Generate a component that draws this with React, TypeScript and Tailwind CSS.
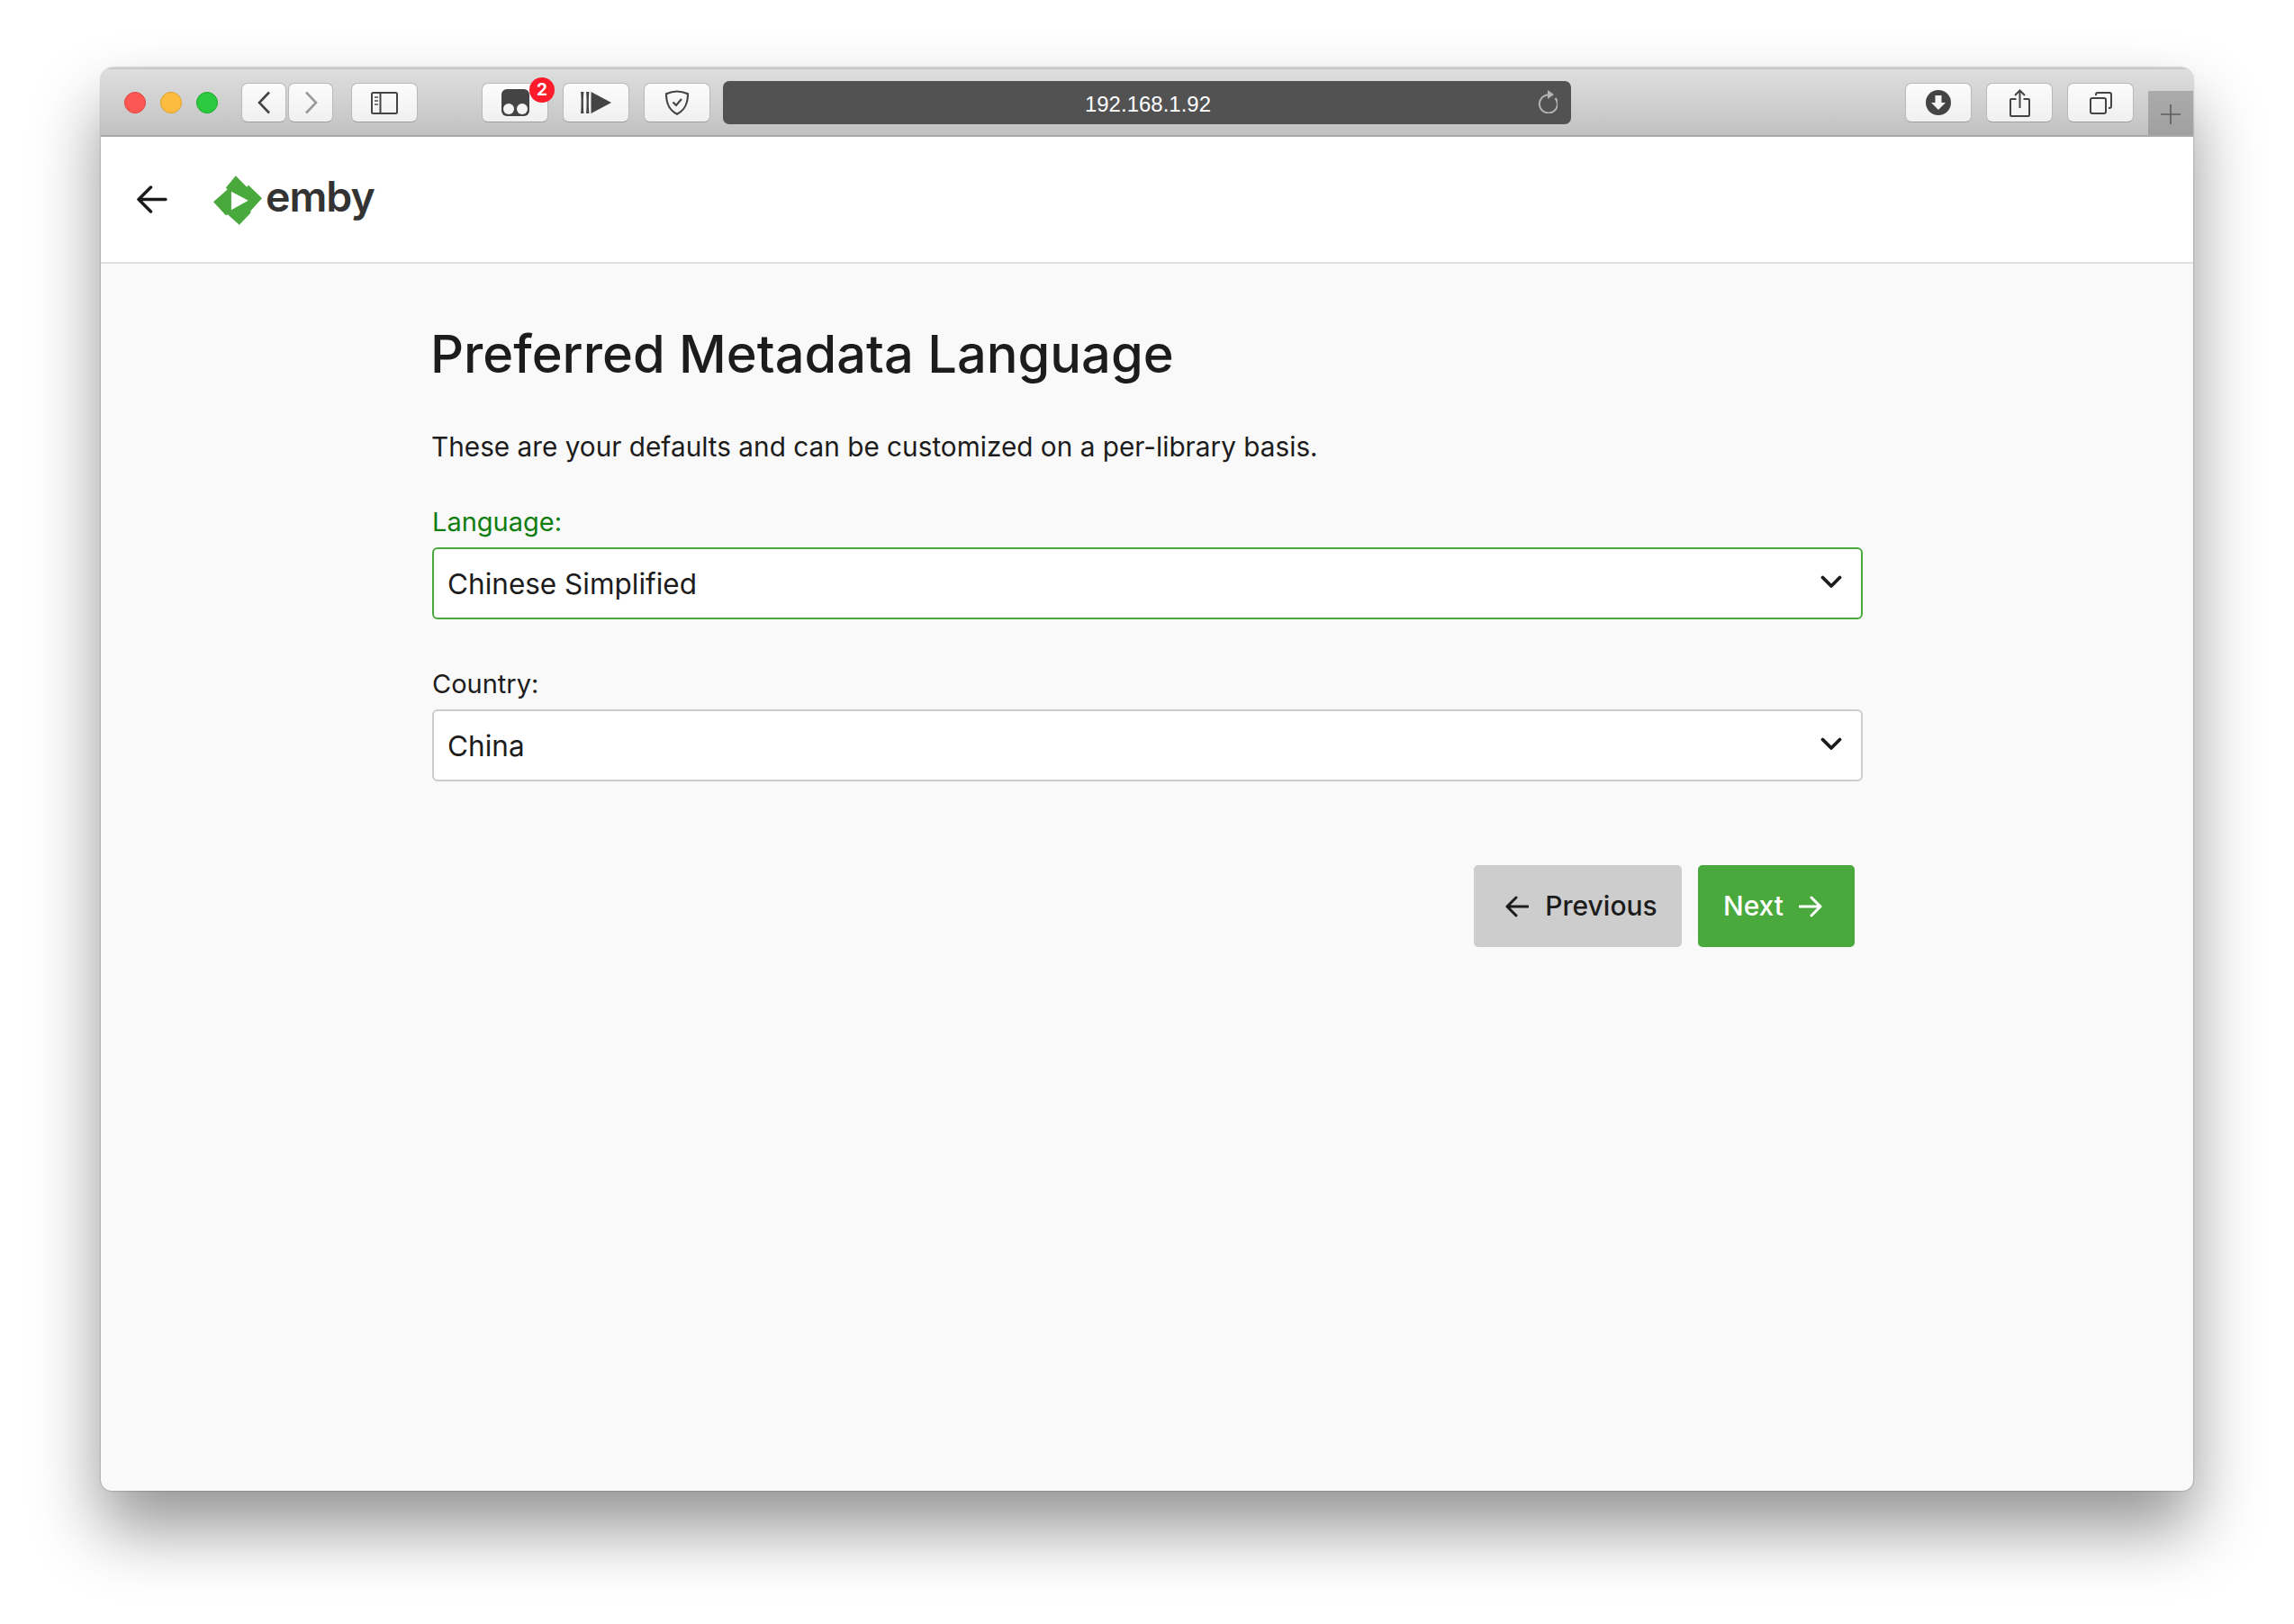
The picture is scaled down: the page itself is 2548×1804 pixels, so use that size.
const font = { fontFamily: "Inter, 'Liberation Sans', sans-serif" };

function ToolButton({ className = "", children }: { className?: string; children?: React.ReactNode }) {
  return (
    <div
      className={`relative flex h-[44px] items-center justify-center rounded-[7px] border border-[#b9b9b9] border-b-[#9f9f9f] bg-gradient-to-b from-[#fcfcfc] to-[#f0f0f0] ${className}`}
    >
      {children}
    </div>
  );
}

function Toolbar() {
  return (
    <div className="flex h-[77px] shrink-0 border-t-2 border-b-2 border-t-[#c8c8c8] border-b-[#a9a9a9] bg-gradient-to-b from-[#dedede] to-[#c2c2c2] pl-[26px] pt-[15px]">
      <div className="flex h-[44px] items-center gap-[16px]">
        <div className="h-[24px] w-[24px] rounded-full border border-[#e0443e] bg-[#fc5753]" />
        <div className="h-[24px] w-[24px] rounded-full border border-[#dea123] bg-[#fdbc40]" />
        <div className="h-[24px] w-[24px] rounded-full border border-[#1aab29] bg-[#2ac93f]" />
      </div>

      <ToolButton className="ml-[26px] w-[50px]">
        <svg width="15" height="26" viewBox="0 0 15 26" fill="none" stroke="#444" strokeWidth="2.6">
          <path d="M13 1.5 2 13l11 11.500" />
        </svg>
      </ToolButton>
      <ToolButton className="ml-[2px] w-[50px]">
        <svg width="15" height="26" viewBox="0 0 15 26" fill="none" stroke="#9b9b9b" strokeWidth="2.6">
          <path d="M2 1.500 13 13 2 24.500" />
        </svg>
      </ToolButton>

      <ToolButton className="ml-[20px] w-[74px]">
        <svg width="30" height="25" viewBox="0 0 30 25" fill="none" stroke="#444" strokeWidth="2">
          <rect x="1" y="1" width="28" height="23" rx="1.500" />
          <path d="M10.500 1v23" />
          <path d="M4 6h4M4 10h4M4 14h4" strokeWidth="2" stroke="#777" />
        </svg>
      </ToolButton>

      <ToolButton className="ml-[71px] w-[74px]">
        <svg width="31" height="30" viewBox="0 0 31 30">
          <path d="M6 0h19a6 6 0 0 1 6 6v18a6 6 0 0 1-6 6H6a6 6 0 0 1-6-6V6a6 6 0 0 1 6-6z" fill="#444" />
          <circle cx="8" cy="22" r="6" fill="#f5f5f5" />
          <circle cx="23" cy="22" r="6" fill="#f5f5f5" />
        </svg>
        <span className="absolute right-[-8px] top-[-7px] flex h-[28px] w-[28px] items-center justify-center rounded-full bg-[#fb1b2a] text-[19px] font-bold text-white">
          2
        </span>
      </ToolButton>
      <ToolButton className="ml-[16px] w-[74px]">
        <svg width="34" height="24" viewBox="0 0 34 24" fill="#444">
          <path d="M0 0h3.500c-.8 4-.8 20 0 24H0c.8-4 .8-20 0-24zM6 0h3.500c-.8 4-.8 20 0 24H6c.8-4 .8-20 0-24z" />
          <path d="M11.500 0 34 12 11.500 24z" />
        </svg>
      </ToolButton>
      <ToolButton className="ml-[16px] w-[74px]">
        <svg width="28" height="28" viewBox="0 0 28 28" fill="none" stroke="#444" strokeWidth="2.200">
          <path d="M14 1.500c4 0 8 1 12 2.800 0 10-2.500 17.500-12 22.500C4.500 21.800 2 14.300 2 4.300c4-1.800 8-2.800 12-2.800z" />
          <path d="m9.500 13.500 3.500 3.500 6-7" />
        </svg>
      </ToolButton>

      <div className="relative ml-[14px] mt-[-2px] flex h-[48px] w-[942px] items-center justify-center rounded-[7px] bg-[#525252]">
        <span className="ml-[2px] mt-[3px] text-[24px] text-white" style={{ fontFamily: "'Liberation Sans', sans-serif" }}>
          192.168.1.92
        </span>
        <svg
          className="absolute right-[15px] top-[10px]"
          width="24"
          height="26"
          viewBox="0 0 24 26"
          fill="none"
          stroke="#b4b4b4"
          strokeWidth="2"
        >
          <path d="M13.500 5.500A10 10 0 1 0 21.500 9" />
          <path d="M13 0v10l7-5z" fill="#b4b4b4" stroke="none" />
        </svg>
      </div>

      <div className="ml-auto flex gap-[16px]">
        <ToolButton className="w-[74px]">
          <svg width="28" height="28" viewBox="0 0 28 28">
            <circle cx="14" cy="14" r="14" fill="#444" />
            <path d="M10.500 6h7v8h4.500L14 22 6 14h4.500z" fill="#f5f5f5" />
          </svg>
        </ToolButton>
        <ToolButton className="w-[74px]">
          <svg width="23" height="31" viewBox="0 0 23 31" fill="none" stroke="#444" strokeWidth="2">
            <path d="M7.500 11H2a1 1 0 0 0-1 1v17a1 1 0 0 0 1 1h19a1 1 0 0 0 1-1V12a1 1 0 0 0-1-1h-5.500" />
            <path d="M11.500 21V2M6 7l5.500-5.500L17 7" />
          </svg>
        </ToolButton>
        <ToolButton className="w-[74px]">
          <svg width="25" height="25" viewBox="0 0 25 25" fill="none" stroke="#444" strokeWidth="2">
            <rect x="1" y="7" width="17" height="17" rx="2" />
            <path d="M7 4V3a2 2 0 0 1 2-2h13a2 2 0 0 1 2 2v13a2 2 0 0 1-2 2h-1" />
          </svg>
        </ToolButton>
      </div>

      <div className="ml-[16px] flex h-[49px] w-[50px] items-center justify-center self-end bg-gradient-to-b from-[#ababab] to-[#a0a0a0]">
        <svg className="mt-[3px]" width="22" height="22" viewBox="0 0 22 22" stroke="#5c5c5c" strokeWidth="1.600">
          <path d="M0 11h22M11 0v22" />
        </svg>
      </div>
    </div>
  );
}

function Chevron() {
  return (
    <svg width="24" height="15" viewBox="0 0 24 15" fill="none" stroke="#1c1c1c" strokeWidth="3.800" strokeLinecap="round" strokeLinejoin="round">
      <path d="M2.500 2.500 12 12 21.500 2.500" />
    </svg>
  );
}

function SelectField({ label, value, focused }: { label: string; value: string; focused?: boolean }) {
  return (
    <div>
      <div className={`text-[29px] leading-[38px] ${focused ? "text-[#0f7d0f]" : "text-[#1c1c1c]"}`}>{label}</div>
      <div
        className={`mt-[9px] flex h-[80px] items-center justify-between rounded-[6px] border-2 bg-white pl-[15px] pr-[21px] ${
          focused ? "border-[#4aa93c]" : "border-[#cccccc]"
        }`}
      >
        <span className="mt-[2px] text-[31.500px] text-[#1c1c1c]">{value}</span>
        <span className="mb-[4px] flex">
          <Chevron />
        </span>
      </div>
    </div>
  );
}

export default function App() {
  return (
    <div className="h-[1804px] w-[2548px] overflow-hidden bg-white pl-[112px] pt-[75px]" style={font}>
      <div className="flex h-[1581px] w-[2324px] flex-col overflow-hidden rounded-t-[14px] rounded-b-[12px] bg-[#f9f9f9] shadow-[0_42px_75px_rgba(0,0,0,0.42),0_0_2px_rgba(0,0,0,0.45)]">
        <Toolbar />

        <header className="flex h-[141px] shrink-0 items-center border-b-2 border-[#e0e0e0] bg-white pl-[40px]">
          <svg width="34" height="31" viewBox="0 0 34 31" fill="none" stroke="#1a1a1a" strokeWidth="3.500" strokeLinecap="round" strokeLinejoin="round">
            <path d="M32 15.500H2M15.500 2 2 15.500 15.500 29" />
          </svg>
          <svg className="ml-[51px] mt-[2px]" width="54" height="55" viewBox="0 0 163 165">
            <path
              d="M75 0 112 38 118 32 163 76 125 118 125 125 87 165 48 130 42 133 0 88 47 46 42 40z"
              fill="#4aa93c"
            />
            <path d="M60 53 117 83 60 115z" fill="#fff" />
          </svg>
          <span className="ml-[4px] mt-[-7px] text-[46.500px] font-semibold leading-none tracking-[-1px] text-[#333333]">
            emby
          </span>
        </header>

        <main className="ml-[368px] w-[1589px] pt-[66px]">
          <h1 className="ml-[-2px] text-[57.800px] font-medium leading-[68px] text-[#1c1c1c]">
            Preferred Metadata Language
          </h1>
          <p className="mt-[50px] ml-[-1px] text-[29.750px] leading-[38px] text-[#1c1c1c]">
            These are your defaults and can be customized on a per-library basis.
          </p>

          <div className="mt-[46px] flex flex-col gap-[53px]">
            <SelectField label="Language:" value="Chinese Simplified" focused />
            <SelectField label="Country:" value="China" />
          </div>

          <div className="mt-[93px] flex justify-end gap-[18px] pr-[9px]">
            <button className="flex h-[91px] w-[231px] items-center justify-center gap-[18px] rounded-[5px] bg-[#cdcdcd] pl-[8px] text-[30px] font-medium text-[#1c1c1c]">
              <svg width="26" height="24" viewBox="0 0 26 24" fill="none" stroke="#1c1c1c" strokeWidth="3" strokeLinecap="round" strokeLinejoin="round">
                <path d="M25 12H2M12 2 2 12l10 10" />
              </svg>
              Previous
            </button>
            <button className="flex h-[91px] w-[174px] items-center justify-center gap-[17px] rounded-[5px] bg-[#4aa93c] pr-[8px] text-[30px] font-medium text-white">
              Next
              <svg width="26" height="24" viewBox="0 0 26 24" fill="none" stroke="#ffffff" strokeWidth="3" strokeLinecap="round" strokeLinejoin="round">
                <path d="M1 12h23M14 2l10 10-10 10" />
              </svg>
            </button>
          </div>
        </main>
      </div>
    </div>
  );
}
